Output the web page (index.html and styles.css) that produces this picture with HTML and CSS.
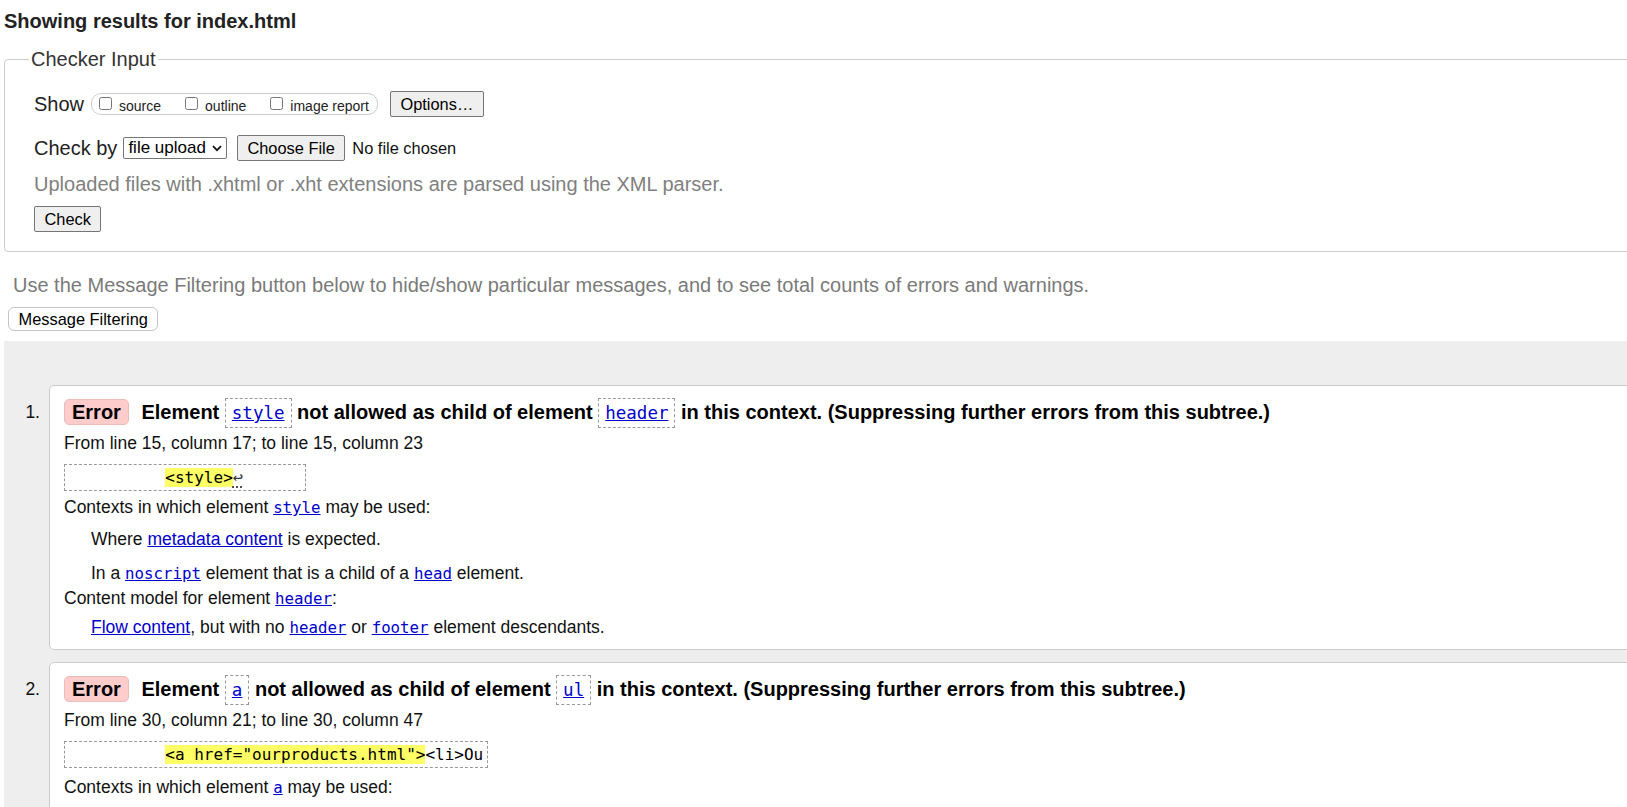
FILE: index.html
```html
<!DOCTYPE html>
<html lang="en">
<head>
<meta charset="utf-8">
<title>Showing results for index.html - Nu Html Checker</title>
<link rel="stylesheet" href="styles.css">
</head>
<body>
<div class="page">
  <h2 class="title">Showing results for index.html</h2>
  <form class="checker">
    <fieldset class="input-set">
      <legend class="input-legend">Checker Input</legend>
      <div class="row show-row">
        <span class="row-label">Show</span>
        <span class="checkgroup">
          <label class="opt"><input type="checkbox" class="cb"><span>source</span></label>
          <label class="opt"><input type="checkbox" class="cb"><span>outline</span></label>
          <label class="opt"><input type="checkbox" class="cb"><span>image report</span></label>
        </span>
        <button type="button" class="btn options-btn">Options…</button>
      </div>
      <div class="row by-row">
        <span class="row-label">Check by</span>
        <span class="select"><span class="select-text">file upload</span><svg class="chev" width="10" height="7" viewBox="0 0 10 7"><path d="M1 1.2 L5 5.2 L9 1.2" fill="none" stroke="#111" stroke-width="1.7"/></svg></span>
        <button type="button" class="btn file-btn">Choose File</button>
        <span class="nofile">No file chosen</span>
      </div>
      <p class="hint">Uploaded files with .xhtml or .xht extensions are parsed using the XML parser.</p>
      <div class="submit-row"><button type="button" class="btn">Check</button></div>
    </fieldset>
  </form>
  <p class="filter-note">Use the Message Filtering button below to hide/show particular messages, and to see total counts of errors and warnings.</p>
  <button type="button" class="filter-btn">Message Filtering</button>
  <div class="results">
    <ol class="messages">
      <li class="msg-item">
        <span class="num">1.</span>
        <div class="card">
          <p class="msg-text"><strong class="badge">Error</strong> Element <code class="tag"><a href="#">style</a></code> not allowed as child of element <code class="tag"><a href="#">header</a></code> in this context. (Suppressing further errors from this subtree.)</p>
          <p class="location">From line 15, column 17; to line 15, column 23</p>
          <div class="extract"><code class="extract-code">          <b class="hl">&lt;style&gt;</b><span class="lf">↩</span>      </code></div>
          <dl class="details">
            <dt class="dt-first">Contexts in which element <a href="#"><code class="ic">style</code></a> may be used:</dt>
            <dd class="dd-first">
              <p class="dd-p">Where <a href="#">metadata content</a> is expected.</p>
              <p class="dd-p dd-p2">In a <a href="#"><code class="ic">noscript</code></a> element that is a child of a <a href="#"><code class="ic">head</code></a> element.</p>
            </dd>
            <dt class="dt-second">Content model for element <a href="#"><code class="ic">header</code></a>:</dt>
            <dd class="dd-second">
              <p class="dd-p"><a href="#">Flow content</a>, but with no <a href="#"><code class="ic">header</code></a> or <a href="#"><code class="ic">footer</code></a> element descendants.</p>
            </dd>
          </dl>
        </div>
      </li>
      <li class="msg-item">
        <span class="num">2.</span>
        <div class="card card-last">
          <p class="msg-text"><strong class="badge">Error</strong> Element <code class="tag"><a href="#">a</a></code> not allowed as child of element <code class="tag"><a href="#">ul</a></code> in this context. (Suppressing further errors from this subtree.)</p>
          <p class="location">From line 30, column 21; to line 30, column 47</p>
          <div class="extract"><code class="extract-code">          <b class="hl">&lt;a href="ourproducts.html"&gt;</b>&lt;li&gt;Ou</code></div>
          <dl class="details details-last">
            <dt class="dt-first">Contexts in which element <a href="#"><code class="ic">a</code></a> may be used:</dt>
          </dl>
        </div>
      </li>
    </ol>
  </div>
</div>
</body>
</html>
```

FILE: styles.css
```css
html {
  overflow: hidden;
}

body {
  margin: 0;
  background: #fff;
  color: #222;
  font-family: "Liberation Sans", Arial, sans-serif;
  font-size: 20px;
}

.page {
  width: 1700px;
  padding-left: 4px;
}

.title {
  margin: 9px 0 0;
  font-size: 20px;
  line-height: 24px;
  font-weight: bold;
  color: #222;
}

.checker {
  margin: 14px 0 0;
}

.input-set {
  margin: 0;
  min-width: 0;
  border: 1px solid #ccc;
  border-radius: 4px;
  padding: 0 0 19px 24px;
}

.input-legend {
  padding: 0 2px;
  font-size: 20px;
  line-height: 24px;
  color: #333;
}

.row {
  display: flex;
  align-items: center;
  height: 26px;
  margin-left: 5px;
}

.show-row {
  margin-top: 20px;
}

.by-row {
  margin-top: 18px;
}

.row-label {
  font-size: 20px;
  line-height: 24px;
  color: #222;
}

.checkgroup {
  display: flex;
  align-items: center;
  height: 20px;
  margin-left: 7px;
  padding: 0 8px 0 7px;
  border: 1px solid #ccc;
  border-radius: 10px;
}

.opt {
  display: flex;
  align-items: center;
  font-size: 14px;
  line-height: 16px;
  color: #222;
}

.opt + .opt {
  margin-left: 24px;
}

.opt span {
  margin-top: 3px;
}

.cb {
  width: 13px;
  height: 13px;
  margin: 0 7px 2px 0;
}

.btn {
  height: 26px;
  padding: 0 9.5px;
  border: 1px solid #767676;
  border-radius: 2px;
  background: #efefef;
  color: #000;
  font-family: "Liberation Sans", Arial, sans-serif;
  font-size: 16.4px;
  line-height: 24px;
}

.options-btn {
  margin-left: 12px;
}

.select {
  display: flex;
  align-items: center;
  height: 20px;
  margin-left: 6px;
  padding: 0 4px 0 4px;
  border: 1px solid #767676;
  border-radius: 2px;
  background: #fff;
  color: #000;
  font-size: 17px;
}

.chev {
  margin-left: 6px;
}

.file-btn {
  margin-left: 10px;
}

.nofile {
  margin-left: 7px;
  font-size: 16.4px;
  color: #111;
}

.hint {
  margin: 11px 0 0 5px;
  line-height: 24px;
  color: #808080;
}

.submit-row {
  margin: 10px 0 0 5px;
}

.filter-note {
  margin: 21px 0 0 9px;
  line-height: 24px;
  color: #7a7a7a;
}

.filter-btn {
  display: block;
  height: 24px;
  margin: 10px 0 0 4px;
  padding: 0 9.5px;
  border: 1px solid #c4c4c4;
  border-radius: 6px;
  background: #fff;
  color: #000;
  font-family: "Liberation Sans", Arial, sans-serif;
  font-size: 16.4px;
  line-height: 22px;
}

.results {
  margin-top: 10px;
  min-height: 700px;
  background: #eee;
  padding-top: 44px;
}

.messages {
  margin: 0;
  padding: 0;
  list-style: none;
}

.msg-item {
  display: flex;
  align-items: flex-start;
  font-size: 17.5px;
  color: #111;
}

.msg-item + .msg-item {
  margin-top: 12px;
}

.num {
  flex: 0 0 45px;
  box-sizing: border-box;
  padding-right: 9px;
  margin-top: 11px;
  text-align: right;
  line-height: 32px;
}

.card {
  flex: 1;
  background: #fff;
  border: 1px solid #ccc;
  border-radius: 5px;
  padding: 10px 14px 9px;
}

.card-last {
  padding-bottom: 30px;
}

.msg-text {
  margin: 0;
  font-size: 20px;
  font-weight: bold;
  line-height: 32px;
  color: #000;
}

.badge {
  display: inline-block;
  margin-right: 7px;
  padding: 0 7px;
  border: 1px solid #ebb;
  border-radius: 5px;
  background: #fcc;
  line-height: 24px;
}

.tag {
  display: inline-block;
  padding: 4px 6px;
  border: 1px dashed #999;
  font-family: "DejaVu Sans Mono", "Liberation Mono", monospace;
  font-size: 17.5px;
  font-weight: normal;
  line-height: 20px;
}

a {
  color: #00c;
  text-decoration: underline;
}

.location {
  margin: 3px 0 0;
  line-height: 24px;
}

.extract {
  margin-top: 9px;
}

.extract-code {
  display: block;
  width: max-content;
  padding: 3px 4px;
  border: 1px dashed #999;
  font-family: "DejaVu Sans Mono", "Liberation Mono", monospace;
  font-size: 16px;
  line-height: 19px;
  white-space: pre;
  color: #000;
}

.hl {
  font-weight: normal;
  background: #ff6;
}

.lf {
  color: #333;
  font-size: 17px;
  text-decoration: underline dotted #333;
  text-underline-offset: 4px;
}

.details {
  margin: 4px 0 0;
}

.details-last {
  margin-top: 7px;
}

.details dt {
  line-height: 24px;
}

.details dd {
  margin: 0 0 0 27px;
}

.dd-first {
  margin-top: 7px !important;
}

.dd-second {
  margin-top: 4px !important;
}

.dd-p {
  margin: 0;
  line-height: 24px;
}

.dd-p2 {
  margin-top: 10px;
}

.ic {
  font-family: "DejaVu Sans Mono", "Liberation Mono", monospace;
  font-size: 0.9em;
}
```
